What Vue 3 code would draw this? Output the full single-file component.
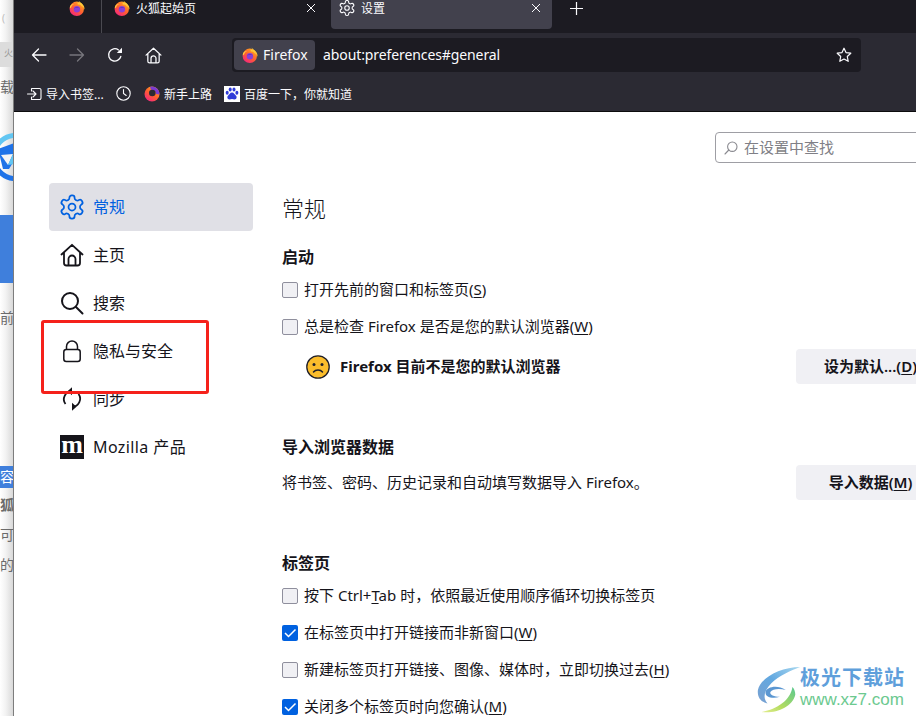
<script setup>
const navItems = [
  { key: 'gear', label: '常规', active: true },
  { key: 'home', label: '主页' },
  { key: 'search', label: '搜索' },
  { key: 'lock', label: '隐私与安全' },
  { key: 'sync', label: '同步' },
  { key: 'moz', label: 'Mozilla 产品' }
]
</script>

<template>
  <div class="screen">
    <svg class="defs" width="0" height="0" aria-hidden="true">
      <defs>
        <linearGradient id="ffBody" x1="0.8" y1="0.1" x2="0.2" y2="0.95">
          <stop offset="0" stop-color="#ffa51f" />
          <stop offset="0.5" stop-color="#ff5f30" />
          <stop offset="1" stop-color="#f5267d" />
        </linearGradient>
        <linearGradient id="ffFlame" x1="0.5" y1="0" x2="0.3" y2="1">
          <stop offset="0" stop-color="#ffe64d" />
          <stop offset="1" stop-color="#ffa51f" />
        </linearGradient>
        <linearGradient id="swBlue" x1="1" y1="0" x2="0" y2="1">
          <stop offset="0" stop-color="#a8d8f0" />
          <stop offset="0.5" stop-color="#62a8e0" />
          <stop offset="1" stop-color="#7aa0d0" />
        </linearGradient>
        <linearGradient id="swGreen" x1="1" y1="0" x2="0" y2="1">
          <stop offset="0" stop-color="#58c890" />
          <stop offset="0.6" stop-color="#b4dc60" />
          <stop offset="1" stop-color="#e4ee90" />
        </linearGradient>
        <symbol id="ff" viewBox="0 0 16 16">
          <circle cx="7.800" cy="8.800" r="7.200" fill="url(#ffBody)" />
          <path d="M9.500 0c.4 1.600 1.800 2.200 3.300 3.500 2 1.800 3 3.800 2.700 6.200-.5-1.800-1.800-3.100-3.500-3.700C11.500 3.800 10 2.200 9.500 0z" fill="url(#ffFlame)" />
          <path d="M8.500 2.600c1.800.2 3.700 1.300 4.700 3-1.300-.9-2.900-1.300-4.400-1.100z" fill="#ffc93a" />
          <path d="M.7 7.500C1.200 5.300 3 3.700 4.900 4.200 3.300 4.800 2.300 6.300 1.800 8.200z" fill="#ffc93a" />
          <circle cx="7.900" cy="9.200" r="3.200" fill="#8a3fd6" />
          <path d="M4.800 8.400c1.400-1.400 4.200-1.600 6.200-.1-1.600-.5-4.100-.4-6.200.1z" fill="#5b33b5" />
        </symbol>
        <symbol id="gear" viewBox="0 0 24 24">
          <path fill="none" stroke="currentColor" stroke-width="1.500" stroke-linejoin="round" d="M12.220 2h-.44a2 2 0 0 0-2 2v.18a2 2 0 0 1-1 1.730l-.43.25a2 2 0 0 1-2 0l-.15-.08a2 2 0 0 0-2.730.73l-.22.38a2 2 0 0 0 .73 2.730l.15.1a2 2 0 0 1 1 1.720v.51a2 2 0 0 1-1 1.740l-.15.09a2 2 0 0 0-.73 2.730l.22.38a2 2 0 0 0 2.730.73l.15-.08a2 2 0 0 1 2 0l.43.25a2 2 0 0 1 1 1.730V20a2 2 0 0 0 2 2h.44a2 2 0 0 0 2-2v-.18a2 2 0 0 1 1-1.730l.43-.25a2 2 0 0 1 2 0l.15.08a2 2 0 0 0 2.730-.73l.22-.39a2 2 0 0 0-.73-2.730l-.15-.08a2 2 0 0 1-1-1.740v-.5a2 2 0 0 1 1-1.740l.15-.09a2 2 0 0 0 .73-2.730l-.22-.38a2 2 0 0 0-2.730-.73l-.15.08a2 2 0 0 1-2 0l-.43-.25a2 2 0 0 1-1-1.730V4a2 2 0 0 0-2-2z" />
          <circle cx="12" cy="12" r="3" fill="none" stroke="currentColor" stroke-width="1.500" />
        </symbol>
        <symbol id="home" viewBox="0 0 24 24">
          <path fill="none" stroke="currentColor" stroke-width="1.800" stroke-linecap="round" stroke-linejoin="round" d="M1.500 11.500 12 1.800l10.500 9.700M4 9.500V20a2.500 2.500 0 0 0 2.500 2.500h11A2.500 2.500 0 0 0 20 20V9.500M8.500 22.500V16a3.500 3.500 0 0 1 7 0v6.500" />
        </symbol>
      </defs>
    </svg>

    <!-- the window behind the browser -->
    <aside class="behind">
      <div class="b-top">(</div>
      <div class="b-tab">火</div>
      <div class="b-line">载</div>
      <svg class="b-logo" width="14" height="48" viewBox="0 0 14 48">
        <path d="M14 2.500A21.500 21.500 0 0 0 -6 24" fill="none" stroke="#62c6f2" stroke-width="5" />
        <path d="M-6 24A21.500 21.500 0 0 0 14 45.500" fill="none" stroke="#1f73e8" stroke-width="5" />
        <path d="M-2 16 14 10v18L9 36H3z" fill="#1f73e8" />
        <path d="M1 22l12-1-5 11z" fill="#f4f4f4" />
        <path d="M13 21l1 10-6 1z" fill="#62c6f2" />
      </svg>
      <div class="b-band"></div>
      <div class="b-line b-qian">前</div>
      <div class="b-blue">容</div>
      <div class="b-line b-a">狐</div>
      <div class="b-line b-b">可</div>
      <div class="b-line b-b">的</div>
    </aside>

    <div class="browser">
      <!-- tab strip -->
      <header class="tabbar">
        <div class="tab tab-pinned">
          <svg class="ico16" width="16" height="16"><use href="#ff" /></svg>
        </div>
        <div class="tab tab-home">
          <svg class="ico16" width="16" height="16"><use href="#ff" /></svg>
          <span class="tab-title">火狐起始页</span>
          <svg class="close" width="10" height="10" viewBox="0 0 10 10"><path d="M1 1l8 8M9 1 1 9" stroke="#fbfbfe" stroke-width="1" /></svg>
        </div>
        <div class="tab tab-active">
          <svg class="tab-gear" width="18" height="18"><use href="#gear" /></svg>
          <span class="tab-title tab-title-set">设置</span>
          <svg class="close" width="10" height="10" viewBox="0 0 10 10"><path d="M1 1l8 8M9 1 1 9" stroke="#fbfbfe" stroke-width="1" /></svg>
        </div>
        <svg class="plus" width="13" height="13" viewBox="0 0 13 13"><path d="M6.500 0v13M0 6.500h13" stroke="#fbfbfe" stroke-width="1.200" /></svg>
      </header>

      <!-- navigation toolbar -->
      <div class="toolbar">
        <div class="navrow">
          <button class="tb">
            <svg width="16" height="16" viewBox="0 0 16 16"><path d="M15 8H1.500M7.500 2 1.500 8l6 6" fill="none" stroke="#fbfbfe" stroke-width="1.300" stroke-linecap="round" stroke-linejoin="round" /></svg>
          </button>
          <button class="tb">
            <svg width="16" height="16" viewBox="0 0 16 16"><path d="M1 8h13.500M8.500 2l6 6-6 6" fill="none" stroke="#77767d" stroke-width="1.300" stroke-linecap="round" stroke-linejoin="round" /></svg>
          </button>
          <button class="tb">
            <svg width="16" height="16" viewBox="0 0 16 16"><path d="M13.800 9.500A6.200 6.200 0 1 1 11.500 2.900" fill="none" stroke="#fbfbfe" stroke-width="1.300" stroke-linecap="round" /><path d="M15 .8v5.200H9.800z" fill="#fbfbfe" /></svg>
          </button>
          <button class="tb tb-home">
            <svg class="w" width="17" height="17"><use href="#home" /></svg>
          </button>
          <div class="urlbar">
            <div class="chip">
              <svg width="16" height="16"><use href="#ff" /></svg>
              <span class="lift">Firefox</span>
            </div>
            <span class="url lift">about:preferences#general</span>
            <svg class="star" width="16" height="16" viewBox="0 0 16 16"><path d="M8 1.200l2 4.400 4.800.6-3.500 3.300.9 4.800L8 12l-4.200 2.300.9-4.800L1.200 6.200 6 5.600z" fill="none" stroke="#fbfbfe" stroke-width="1.200" stroke-linejoin="round" /></svg>
          </div>
        </div>
        <div class="bookmarks">
          <div class="bm bm-import">
            <svg width="15" height="14" viewBox="0 0 15 14"><path d="M5 1.500h7.500a1.500 1.500 0 0 1 1.500 1.500v8a1.500 1.500 0 0 1-1.500 1.500H5M4.500 4v-2.500M4.500 10v2.500M.5 7H9M6 4l3 3-3 3" fill="none" stroke="#fbfbfe" stroke-width="1.100" stroke-linecap="round" stroke-linejoin="round" /></svg>
            <span>导入书签...</span>
          </div>
          <svg class="bm-clock" width="15" height="15" viewBox="0 0 15 15"><circle cx="7.500" cy="7.500" r="6.700" fill="none" stroke="#fbfbfe" stroke-width="1.100" /><path d="M7.500 3.500v4l2.700 2" fill="none" stroke="#fbfbfe" stroke-width="1.100" stroke-linecap="round" /></svg>
          <div class="bm bm-start">
            <svg width="16" height="16" viewBox="0 0 16 16"><circle cx="8" cy="8" r="7.500" fill="url(#ffBody)" /><path d="M6 .8A7.500 7.500 0 0 1 15.400 8.500L12 8A4 4 0 0 0 7 4z" fill="#7b3ad0" /><circle cx="8.300" cy="7" r="3.300" fill="#2b2a33" /></svg>
            <span>新手上路</span>
          </div>
          <div class="bm bm-baidu">
            <svg width="16" height="16" viewBox="0 0 16 16"><rect width="16" height="16" fill="#fff" /><g fill="#2f3bd8"><ellipse cx="3.200" cy="6.800" rx="1.500" ry="2" /><ellipse cx="6.200" cy="3.500" rx="1.500" ry="2" /><ellipse cx="10" cy="3.500" rx="1.500" ry="2" /><ellipse cx="12.900" cy="6.800" rx="1.500" ry="2" /><path d="M8 6.500c-2 0-2.500 2-3.800 3-1.400 1.100-1 4 1.300 4 1 0 1.600-.4 2.500-.4s1.500.4 2.500.4c2.300 0 2.700-2.900 1.300-4C10.500 8.500 10 6.500 8 6.500z" /></g></svg>
            <span>百度一下，你就知道</span>
          </div>
        </div>
      </div>

      <!-- preferences page -->
      <main class="page">
        <nav class="sidebar">
          <div v-for="item in navItems" :key="item.key" class="nav-item" :class="{ active: item.active }">
            <span class="nav-icon">
              <svg v-if="item.key === 'gear'" class="big" width="28" height="28"><use href="#gear" /></svg>
              <svg v-else-if="item.key === 'home'" width="24" height="24"><use href="#home" /></svg>
              <svg v-else-if="item.key === 'search'" width="24" height="24" viewBox="0 0 24 24"><circle cx="10" cy="10" r="8" fill="none" stroke="currentColor" stroke-width="2" /><path d="M16 16l6.500 6.500" stroke="currentColor" stroke-width="2" stroke-linecap="round" /></svg>
              <svg v-else-if="item.key === 'lock'" width="24" height="24" viewBox="0 0 24 24"><rect x="3.800" y="10.500" width="16.400" height="12" rx="2.500" fill="none" stroke="currentColor" stroke-width="1.500" /><path d="M6.500 10.500V7.500a5.500 5.500 0 0 1 11 0v3" fill="none" stroke="currentColor" stroke-width="1.500" /></svg>
              <svg v-else-if="item.key === 'sync'" width="24" height="24" viewBox="0 0 24 24"><path d="M5.500 17A8 8 0 0 1 12 4.200M18.500 7A8 8 0 0 1 12 19.800" fill="none" stroke="currentColor" stroke-width="1.800" /><path d="M12 .2v8l-4.500-4zM12 23.800v-8l4.500 4z" fill="currentColor" /></svg>
              <span v-else class="moz">m</span>
            </span>
            <span class="nav-label" :class="{ 'nav-label-moz': item.key === 'moz' }">{{ item.label }}</span>
          </div>
        </nav>

        <section class="content">
          <div class="search-wrap">
            <div class="search">
              <svg width="14" height="14" viewBox="0 0 14 14"><circle cx="8.300" cy="5.700" r="4.700" fill="none" stroke="#8a8a90" stroke-width="1.100" /><path d="M4.800 9 1 13" stroke="#8a8a90" stroke-width="1.100" stroke-linecap="round" /></svg>
              <span class="lift">在设置中查找</span>
            </div>
          </div>

          <h1>常规</h1>

          <h2>启动</h2>
          <label class="row"><i class="cb"></i><span class="lift">打开先前的窗口和标签页(<u>S</u>)</span></label>
          <label class="row"><i class="cb"></i><span class="lift">总是检查 Firefox 是否是您的默认浏览器(<u>W</u>)</span></label>
          <div class="action action-default">
            <div class="notice">
              <svg width="24" height="24" viewBox="0 0 24 24"><circle cx="12" cy="12" r="11.200" fill="#fbbd2c" stroke="#20202a" stroke-width="1.300" /><circle cx="8" cy="9.500" r="1.500" fill="#20202a" /><circle cx="16" cy="9.500" r="1.500" fill="#20202a" /><path d="M7.500 17c1.200-1.500 2.700-2 4.500-2s3.300.5 4.500 2" fill="none" stroke="#20202a" stroke-width="1.500" stroke-linecap="round" /></svg>
              <b class="lift">Firefox 目前不是您的默认浏览器</b>
            </div>
            <button class="btn">设为默认...(<u>D</u>)</button>
          </div>

          <h2 class="h-import">导入浏览器数据</h2>
          <div class="action action-import">
            <span class="lift">将书签、密码、历史记录和自动填写数据导入 Firefox。</span>
            <button class="btn">导入数据(<u>M</u>)</button>
          </div>

          <h2 class="h-tabs">标签页</h2>
          <label class="row"><i class="cb"></i><span class="lift">按下 Ctrl+<u>T</u>ab 时，依照最近使用顺序循环切换标签页</span></label>
          <label class="row"><i class="cb on"><svg width="16" height="16" viewBox="0 0 16 16"><path d="M3 8l3.500 3.500L13.500 4.500" fill="none" stroke="#fff" stroke-width="1.500" /></svg></i><span class="lift">在标签页中打开链接而非新窗口(<u>W</u>)</span></label>
          <label class="row"><i class="cb"></i><span class="lift">新建标签页打开链接、图像、媒体时，立即切换过去(<u>H</u>)</span></label>
          <label class="row"><i class="cb on"><svg width="16" height="16" viewBox="0 0 16 16"><path d="M3 8l3.500 3.500L13.500 4.500" fill="none" stroke="#fff" stroke-width="1.500" /></svg></i><span class="lift">关闭多个标签页时向您确认(<u>M</u>)</span></label>
        </section>
      </main>
    </div>

    <!-- annotation over the sidebar -->
    <div class="redbox"></div>

    <!-- watermark -->
    <div class="watermark">
      <svg width="46" height="50" viewBox="0 0 48 52">
        <path d="M46 3C26 3 5 14 2 27c-1 8 4 13 10 14-5-5-4-13 4-21C24 12 36 7 46 3z" fill="url(#swBlue)" />
        <path d="M31 27c-9-6-20-3-21 2-1 5 7 8 15 5-6 0-11-2-10-5 2-3 9-4 16-2z" fill="#5b97d2" />
        <path d="M38 24c-2 14-16 23-32 26 14 2 32-5 35-18 0-3-1-6-3-8z" fill="url(#swGreen)" />
      </svg>
      <div class="wm-text">
        <span class="wm-cn">极光下载站</span>
        <span class="wm-en">www.xz7.com</span>
      </div>
    </div>
  </div>
</template>

<style>
html, body { margin: 0; padding: 0; overflow: hidden; background: #fff; }
</style>

<style scoped>
.screen {
  position: relative;
  display: flex;
  width: 916px;
  height: 716px;
  overflow: hidden;
  font-family: "Noto Sans", "Noto Sans CJK SC", sans-serif;
  color: #15141a;
}
.defs { position: absolute; }
.lift { padding-bottom: 2px; }

/* background window */
.behind {
  flex: none;
  width: 13px;
  height: 716px;
  overflow: hidden;
  border-right: 1px solid #7d7d7d;
  background: linear-gradient(90deg, #fff 0%, #f2f2f2 45%, #d9d9d9 100%);
  font-size: 14px;
  line-height: 22px;
  color: #6b6b6b;
}
.b-top { height: 42px; color: #bbb; font-size: 10px; line-height: 36px; padding-left: 2px; }
.b-tab { height: 25px; background: #dcdcdc; padding-left: 4px; color: #999; font-size: 9px; line-height: 22px; }
.b-line { height: 22px; white-space: nowrap; }
.b-tab + .b-line { margin-top: 9px; }
.b-logo { display: block; margin-top: 35px; }
.b-band { height: 68px; margin-top: 34px; background: #3f7fdc; }
.b-qian { margin-top: 24px; }
.b-blue { height: 22px; margin-top: 137px; background: #3f7fdc; color: #fff; }
.b-a { margin-top: 6px; font-weight: 700; }
.b-b { margin-top: 8px; }

.browser {
  flex: none;
  width: 902px;
  height: 716px;
  overflow: hidden;
  display: flex;
  flex-direction: column;
}

/* tab strip */
.tabbar {
  flex: none;
  height: 33px;
  display: flex;
  align-items: flex-start;
  background: #1c1b22;
  color: #fbfbfe;
  font-size: 12px;
  line-height: 16px;
}
.tab { box-sizing: border-box; display: flex; align-items: flex-start; }
.ico16 { display: block; flex: none; }
.tab-gear { display: block; flex: none; margin-top: -1px; }
.tab-pinned {
  width: 88px;
  height: 33px;
  padding-left: 55px;
  border-right: 1px solid #4a4950;
}
.tab-home { width: 229px; height: 29px; padding: 0 15px 0 12px; }
.tab-title { flex: 1; margin-left: 6px; padding-top: 1px; white-space: nowrap; }
.tab-title-set { margin-left: 5px; }
.close { flex: none; margin-top: 3px; }
.tab-active {
  width: 221px;
  height: 29px;
  padding: 0 11px 0 7px;
  background: #42414d;
  border-radius: 0 0 4px 4px;
  color: #fbfbfe;
}
.plus { flex: none; margin: 2px 0 0 18px; }

/* toolbar */
.toolbar {
  flex: none;
  box-sizing: border-box;
  height: 79px;
  background: #2b2a33;
  border-bottom: 1px solid #0c0c0d;
  color: #fbfbfe;
}
.navrow { display: flex; align-items: center; padding: 5px 0 0 6px; height: 34px; }
.tb {
  width: 38px;
  height: 34px;
  flex: none;
  display: flex;
  align-items: center;
  justify-content: center;
  background: none;
  border: 0;
  padding: 0;
}
.tb-home { margin-right: 60px; }
.w { color: #fbfbfe; }
.urlbar {
  flex: none;
  box-sizing: border-box;
  width: 629px;
  height: 34px;
  display: flex;
  align-items: center;
  padding: 0 9px 0 2px;
  background: #1c1b22;
  border-radius: 4px;
}
.chip {
  flex: none;
  box-sizing: border-box;
  width: 81px;
  height: 30px;
  display: flex;
  align-items: center;
  gap: 5px;
  padding-left: 8px;
  background: #42414d;
  border-radius: 4px;
  font-size: 14px;
}
.url { flex: 1; margin-left: 8px; font-size: 14px; letter-spacing: -0.1px; white-space: nowrap; }
.star { flex: none; }

.bookmarks {
  display: flex;
  align-items: center;
  height: 23px;
  margin-top: 10px;
  padding-left: 13px;
  font-size: 12px;
  white-space: nowrap;
}
.bm { display: flex; align-items: center; }
.bm-import { gap: 4px; width: 84px; }
.bm-import svg { flex: none; }
.bm-clock { flex: none; margin-left: 5px; }
.bm-start { gap: 4px; margin-left: 13px; }
.bm-baidu { gap: 4px; margin-left: 12px; }

/* page */
.page {
  flex: 1;
  display: flex;
  background: #fff;
  min-height: 0;
}
.sidebar {
  flex: none;
  width: 204px;
  margin: 71px 29px 0 35px;
  display: flex;
  flex-direction: column;
}
.nav-item {
  flex: none;
  height: 48px;
  display: flex;
  align-items: center;
  padding-left: 11px;
  border-radius: 4px;
  font-size: 16px;
  color: #15141a;
}
.nav-item.active { background: #e0e0e6; color: #0061e0; }
.nav-icon {
  flex: none;
  width: 24px;
  height: 24px;
  display: flex;
  align-items: center;
  justify-content: center;
  margin-right: 9px;
}
.big { flex: none; }
.moz {
  width: 24px;
  height: 24px;
  background: #15141a;
  color: #fff;
  font-family: "Liberation Serif", serif;
  font-weight: 700;
  font-size: 26px;
  line-height: 20px;
  text-align: center;
}
.nav-label { white-space: nowrap; padding-bottom: 2px; }
.nav-label-moz { letter-spacing: 0.4px; }

.content {
  flex: none;
  width: 663px;
  display: flex;
  flex-direction: column;
  font-size: 15px;
}
.content > * { flex: none; }
.search-wrap { padding: 20px 0 0 433px; }
.search {
  box-sizing: border-box;
  width: 300px;
  height: 31px;
  display: flex;
  align-items: center;
  gap: 6px;
  padding-left: 8px;
  border: 1px solid #9e9ea4;
  border-radius: 4px;
  color: #7f7f86;
  font-size: 15px;
}
h1 {
  margin: 30px 0 2px;
  font-size: 22px;
  line-height: 30px;
  font-weight: 300;
  color: #15141a;
}
h2 {
  margin: 20px 0 0;
  font-size: 16px;
  line-height: 24px;
  font-weight: 700;
}
.h-import { margin-top: 51px; }
.h-tabs { margin-top: 51px; }
.row {
  height: 37px;
  display: flex;
  align-items: center;
  white-space: pre;
}
h2 + .row { margin-top: 2px; }
.cb {
  box-sizing: border-box;
  flex: none;
  width: 16px;
  height: 16px;
  margin-right: 6px;
  background: #f0f0f4;
  border: 1px solid #8f8f9d;
  border-radius: 2px;
  display: block;
}
.cb.on { background: #0061e0; border: 0; }
.cb svg { display: block; }
u { text-underline-offset: 2px; }
.action {
  display: flex;
  align-items: center;
  justify-content: space-between;
  height: 35px;
  white-space: nowrap;
}
.action-default { margin-top: 4px; }
.action-import { margin-top: 6px; }
.notice { display: flex; align-items: center; gap: 10px; padding-left: 24px; }
.notice b { font-weight: 700; }
.btn {
  flex: none;
  width: 149px;
  height: 35px;
  padding: 0 0 2px;
  background: #f0f0f4;
  border: 0;
  border-radius: 4px;
  font: inherit;
  font-weight: 600;
  color: #15141a;
  white-space: nowrap;
}

.redbox {
  position: absolute;
  left: 41px;
  top: 320px;
  width: 168px;
  height: 74px;
  box-sizing: border-box;
  border: 3px solid #f5211b;
  border-radius: 3px;
}

.watermark {
  position: absolute;
  left: 756px;
  top: 664px;
  display: flex;
  align-items: flex-start;
}
.wm-text { display: flex; flex-direction: column; margin-left: -2px; }
.wm-cn {
  font-family: "Noto Sans CJK SC", sans-serif;
  font-size: 20px;
  line-height: 26px;
  font-weight: 700;
  letter-spacing: 1px;
  color: #5f9fdb;
}
.wm-en {
  font-family: "Liberation Sans", sans-serif;
  font-size: 17px;
  line-height: 20px;
  color: #6cc98f;
}
</style>
